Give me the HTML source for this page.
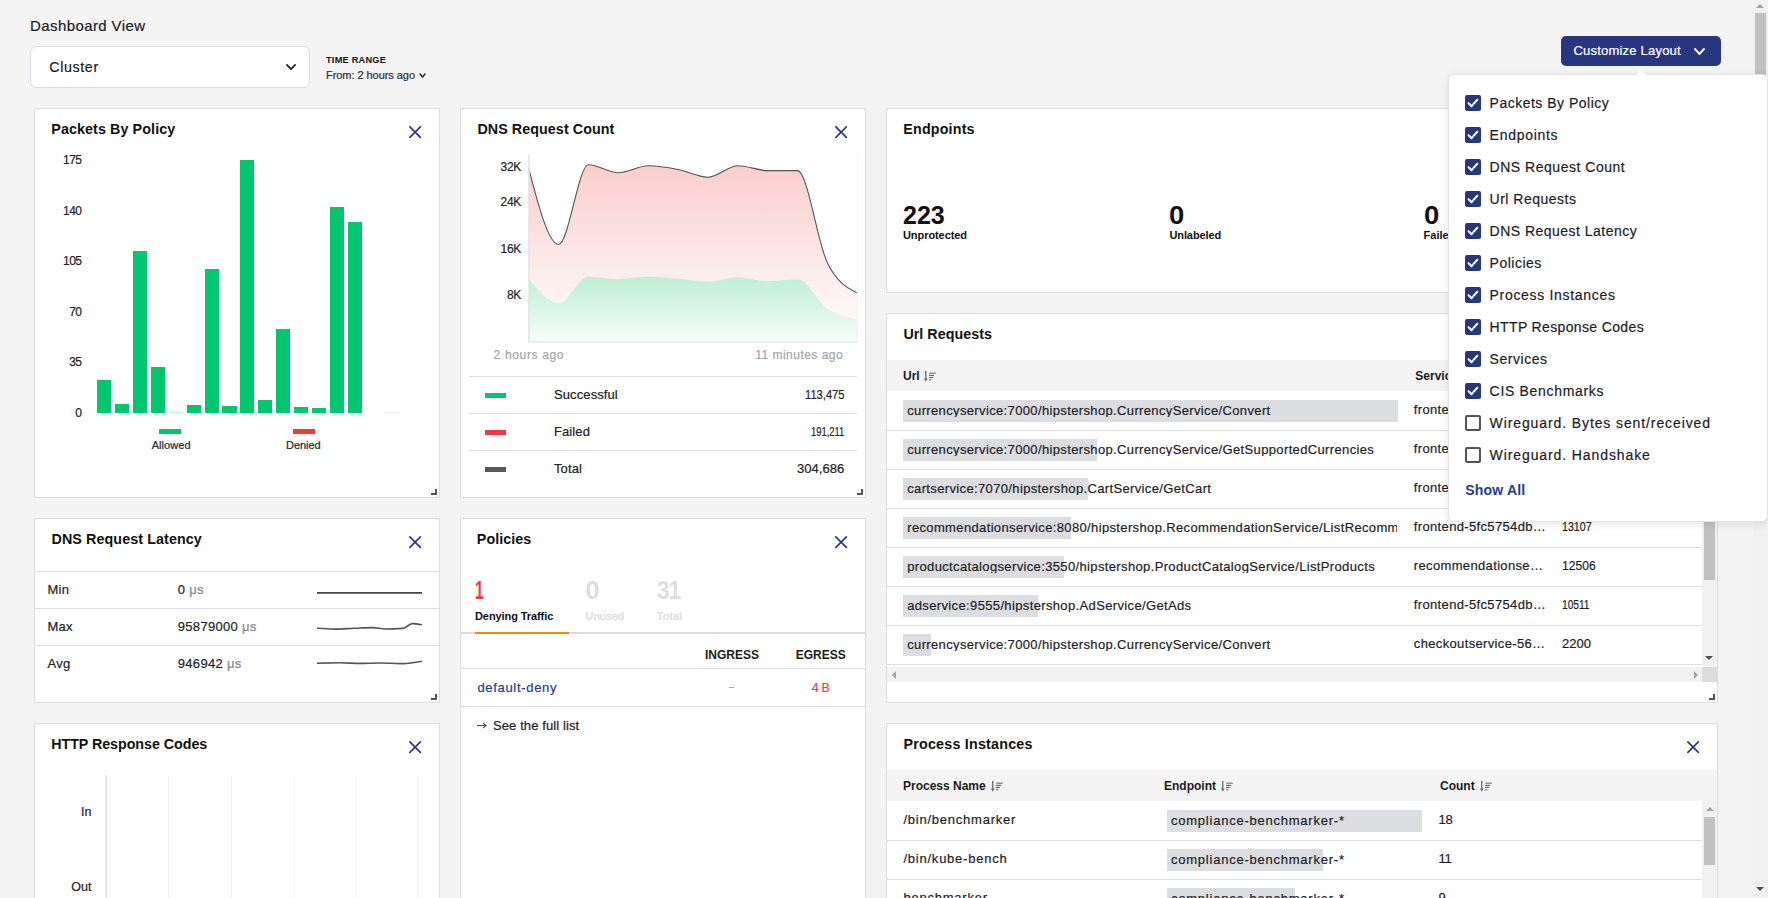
<!DOCTYPE html><html><head><meta charset="utf-8"><style>

html,body{margin:0;padding:0;width:1768px;height:898px;overflow:hidden;background:#f4f4f4;font-family:"Liberation Sans", sans-serif;}
body{position:relative;}
.card{position:absolute;background:#fff;border:1px solid #dcdde0;box-sizing:border-box;overflow:hidden;}

</style></head><body>
<span style="position:absolute;top:18.25px;font-size:15px;line-height:15px;font-weight:400;color:#1b1b26;white-space:nowrap;letter-spacing:0.407px;-webkit-text-stroke:0.2px #1b1b26;left:30px;">Dashboard View</span>
<div style="position:absolute;left:30px;top:46px;width:280px;height:42px;background:#fff;border:1px solid #dadbe0;border-radius:6px;box-sizing:border-box;"></div>
<span style="position:absolute;top:59.84px;font-size:14.3px;line-height:14.3px;font-weight:400;color:#1b1b26;white-space:nowrap;letter-spacing:0.615px;-webkit-text-stroke:0.2px #1b1b26;left:49.2px;">Cluster</span>
<svg style="position:absolute;left:284.9px;top:63px" width="12.1" height="8.2" viewBox="0 0 12.1 8.2"><path d="M2,2 L6.05,6.2 L10.1,2" fill="none" stroke="#222" stroke-width="1.8" stroke-linecap="round" stroke-linejoin="round"/></svg>
<span style="position:absolute;top:55.88px;font-size:9.2px;line-height:9.2px;font-weight:700;color:#111;white-space:nowrap;letter-spacing:0.231px;left:326px;">TIME RANGE</span>
<span style="position:absolute;top:69.65px;font-size:11px;line-height:11px;font-weight:400;color:#2a2a3a;white-space:nowrap;letter-spacing:-0.051px;-webkit-text-stroke:0.2px #2a2a3a;left:326px;">From: 2 hours ago</span>
<svg style="position:absolute;left:417.6px;top:72.4px" width="9" height="7" viewBox="0 0 9 7"><path d="M2,2 L4.5,5 L7,2" fill="none" stroke="#222" stroke-width="1.4" stroke-linecap="round" stroke-linejoin="round"/></svg>
<div style="position:absolute;left:1561px;top:36px;width:160px;height:30px;background:#27367f;border-radius:5px;"></div>
<span style="position:absolute;top:43.95px;font-size:13px;line-height:13px;font-weight:400;color:#fff;white-space:nowrap;letter-spacing:0.215px;-webkit-text-stroke:0.2px #fff;left:1573.4px;">Customize Layout</span>
<svg style="position:absolute;left:1692.5px;top:46.8px" width="13" height="9" viewBox="0 0 13 9"><path d="M2,2 L6.5,7 L11,2" fill="none" stroke="#fff" stroke-width="1.9" stroke-linecap="round" stroke-linejoin="round"/></svg>
<div style="position:absolute;left:34px;top:108px;width:406px;height:390px;background:#fff;border:1px solid #dcdde0;box-sizing:border-box;"></div>
<div style="position:absolute;left:460px;top:108px;width:406px;height:390px;background:#fff;border:1px solid #dcdde0;box-sizing:border-box;"></div>
<div style="position:absolute;left:886px;top:108px;width:832px;height:185px;background:#fff;border:1px solid #dcdde0;box-sizing:border-box;"></div>
<div style="position:absolute;left:886px;top:313px;width:832px;height:390px;background:#fff;border:1px solid #dcdde0;box-sizing:border-box;"></div>
<div style="position:absolute;left:34px;top:518px;width:406px;height:185px;background:#fff;border:1px solid #dcdde0;box-sizing:border-box;"></div>
<div style="position:absolute;left:460px;top:518px;width:406px;height:390px;background:#fff;border:1px solid #dcdde0;box-sizing:border-box;"></div>
<div style="position:absolute;left:34px;top:723px;width:406px;height:390px;background:#fff;border:1px solid #dcdde0;box-sizing:border-box;"></div>
<div style="position:absolute;left:886px;top:723px;width:832px;height:390px;background:#fff;border:1px solid #dcdde0;box-sizing:border-box;"></div>
<span style="position:absolute;top:121.84px;font-size:14.3px;line-height:14.3px;font-weight:700;color:#111;white-space:nowrap;letter-spacing:0.095px;left:51.3px;">Packets By Policy</span>
<svg style="position:absolute;left:409px;top:126px" width="13" height="13" viewBox="0 0 13 13"><path d="M0.85,0.85 L11.35,11.35 M11.35,0.85 L0.85,11.35" stroke="#263482" stroke-width="1.6" stroke-linecap="round"/></svg>
<span style="position:absolute;top:153.50px;font-size:12px;line-height:12px;font-weight:400;color:#222;white-space:nowrap;letter-spacing:-0.500px;-webkit-text-stroke:0.2px #222;right:1686.5px;">175</span>
<span style="position:absolute;top:204.50px;font-size:12px;line-height:12px;font-weight:400;color:#222;white-space:nowrap;letter-spacing:-0.500px;-webkit-text-stroke:0.2px #222;right:1686.5px;">140</span>
<span style="position:absolute;top:254.50px;font-size:12px;line-height:12px;font-weight:400;color:#222;white-space:nowrap;letter-spacing:-0.500px;-webkit-text-stroke:0.2px #222;right:1686.5px;">105</span>
<span style="position:absolute;top:305.50px;font-size:12px;line-height:12px;font-weight:400;color:#222;white-space:nowrap;letter-spacing:-0.500px;-webkit-text-stroke:0.2px #222;right:1686.5px;">70</span>
<span style="position:absolute;top:356.00px;font-size:12px;line-height:12px;font-weight:400;color:#222;white-space:nowrap;letter-spacing:-0.500px;-webkit-text-stroke:0.2px #222;right:1686.5px;">35</span>
<span style="position:absolute;top:406.50px;font-size:12px;line-height:12px;font-weight:400;color:#222;white-space:nowrap;letter-spacing:-0.500px;-webkit-text-stroke:0.2px #222;right:1686.5px;">0</span>
<div style="position:absolute;left:97.30px;top:379.70px;width:14.1px;height:33.30px;background:#01c670"></div>
<div style="position:absolute;left:115.18px;top:403.90px;width:14.1px;height:9.10px;background:#01c670"></div>
<div style="position:absolute;left:133.06px;top:250.90px;width:14.1px;height:162.10px;background:#01c670"></div>
<div style="position:absolute;left:150.94px;top:366.60px;width:14.1px;height:46.40px;background:#01c670"></div>
<div style="position:absolute;left:168.82px;top:412.30px;width:14.1px;height:0.70px;background:#01c670"></div>
<div style="position:absolute;left:186.70px;top:404.60px;width:14.1px;height:8.40px;background:#01c670"></div>
<div style="position:absolute;left:204.58px;top:268.50px;width:14.1px;height:144.50px;background:#01c670"></div>
<div style="position:absolute;left:222.46px;top:405.60px;width:14.1px;height:7.40px;background:#01c670"></div>
<div style="position:absolute;left:240.34px;top:160.40px;width:14.1px;height:252.60px;background:#01c670"></div>
<div style="position:absolute;left:258.22px;top:400.40px;width:14.1px;height:12.60px;background:#01c670"></div>
<div style="position:absolute;left:276.10px;top:328.90px;width:14.1px;height:84.10px;background:#01c670"></div>
<div style="position:absolute;left:293.98px;top:407.30px;width:14.1px;height:5.70px;background:#01c670"></div>
<div style="position:absolute;left:311.86px;top:408.00px;width:14.1px;height:5.00px;background:#01c670"></div>
<div style="position:absolute;left:329.74px;top:207.00px;width:14.1px;height:206.00px;background:#01c670"></div>
<div style="position:absolute;left:347.62px;top:221.50px;width:14.1px;height:191.50px;background:#01c670"></div>
<div style="position:absolute;left:169px;top:412px;width:14px;height:1px;background:#bdebd5"></div>
<div style="position:absolute;left:384px;top:412px;width:14px;height:1px;background:#fbe3e4"></div>
<div style="position:absolute;left:158.6px;top:429px;width:22.4px;height:5px;background:#01c670"></div>
<div style="position:absolute;left:293px;top:429px;width:22px;height:5px;background:#ef3b3d"></div>
<span style="position:absolute;top:439.65px;font-size:11px;line-height:11px;font-weight:400;color:#222;white-space:nowrap;letter-spacing:0.067px;-webkit-text-stroke:0.2px #222;left:151.7px;">Allowed</span>
<span style="position:absolute;top:439.65px;font-size:11px;line-height:11px;font-weight:400;color:#222;white-space:nowrap;letter-spacing:-0.027px;-webkit-text-stroke:0.2px #222;left:286px;">Denied</span>
<div style="position:absolute;left:431px;top:489px;width:6px;height:6px;border-right:2px solid #555;border-bottom:2px solid #555;box-sizing:border-box"></div>
<span style="position:absolute;top:121.84px;font-size:14.3px;line-height:14.3px;font-weight:700;color:#111;white-space:nowrap;letter-spacing:0.069px;left:477.4px;">DNS Request Count</span>
<svg style="position:absolute;left:835px;top:126px" width="13" height="13" viewBox="0 0 13 13"><path d="M0.85,0.85 L11.35,11.35 M11.35,0.85 L0.85,11.35" stroke="#263482" stroke-width="1.6" stroke-linecap="round"/></svg>
<svg style="position:absolute;left:0;top:0" width="1768" height="898" viewBox="0 0 1768 898">
<defs>
<linearGradient id="gr" x1="0" y1="0" x2="0" y2="1"><stop offset="0" stop-color="#fbcdcd"/><stop offset="0.3" stop-color="#fcdcdc"/><stop offset="0.62" stop-color="#fdeded"/><stop offset="1" stop-color="#fffefe"/></linearGradient>
<linearGradient id="gg" x1="0" y1="0" x2="0" y2="1"><stop offset="0" stop-color="#bdefd6"/><stop offset="1" stop-color="#f7fdfa"/></linearGradient>
</defs>
<path d="M528.70,168.30 C538.66,206.40 548.62,244.50 558.57,244.50 C568.53,244.50 578.49,164.80 588.45,164.80 C598.40,164.80 608.36,172.80 618.32,172.80 C628.28,172.80 638.23,165.80 648.19,165.80 C658.15,165.80 668.11,167.60 678.06,169.50 C688.02,171.40 697.98,177.20 707.94,177.20 C717.89,177.20 727.85,165.70 737.81,165.70 C747.77,165.70 757.72,170.60 767.68,170.60 C777.64,170.60 787.60,170.60 797.55,170.60 C807.51,170.60 817.47,243.07 827.43,263.00 C837.38,282.93 847.34,287.92 857.30,292.90 L857.3,342 L528.7,342 Z" fill="url(#gr)"/>
<path d="M528.70,279.00 C538.66,291.00 548.62,303.00 558.57,303.00 C568.53,303.00 578.49,276.70 588.45,276.70 C598.40,276.70 608.36,279.00 618.32,279.00 C628.28,279.00 638.23,276.50 648.19,276.50 C658.15,276.50 668.11,277.72 678.06,278.60 C688.02,279.48 697.98,281.80 707.94,281.80 C717.89,281.80 727.85,277.20 737.81,277.20 C747.77,277.20 757.72,281.30 767.68,281.30 C777.64,281.30 787.60,279.20 797.55,279.20 C807.51,279.20 817.47,301.80 827.43,308.50 C837.38,315.20 847.34,317.30 857.30,319.40 L857.3,342 L528.7,342 Z" fill="url(#gg)"/>
<path d="M528.70,168.30 C538.66,206.40 548.62,244.50 558.57,244.50 C568.53,244.50 578.49,164.80 588.45,164.80 C598.40,164.80 608.36,172.80 618.32,172.80 C628.28,172.80 638.23,165.80 648.19,165.80 C658.15,165.80 668.11,167.60 678.06,169.50 C688.02,171.40 697.98,177.20 707.94,177.20 C717.89,177.20 727.85,165.70 737.81,165.70 C747.77,165.70 757.72,170.60 767.68,170.60 C777.64,170.60 787.60,170.60 797.55,170.60 C807.51,170.60 817.47,243.07 827.43,263.00 C837.38,282.93 847.34,287.92 857.30,292.90" fill="none" stroke="#555" stroke-width="1.1"/>
<line x1="529" y1="155" x2="529" y2="342.5" stroke="#e4e4e6" stroke-width="1.6"/>
<line x1="528" y1="342" x2="857.5" y2="342" stroke="#e8e8ea" stroke-width="1.6"/>
<line x1="857.3" y1="155" x2="857.3" y2="342" stroke="#f3f3f4" stroke-width="1"/>
<path d="M317,592.9 H422" stroke="#444" stroke-width="1.8" fill="none"/>
<path d="M317.00,628.30 C323.00,628.70 329.00,629.10 335.00,629.10 C341.33,629.10 347.67,628.55 354.00,628.30 C360.33,628.05 366.67,627.60 373.00,627.60 C377.00,627.60 381.00,629.00 385.00,629.00 C391.00,629.00 397.00,628.80 403.00,628.40 C406.10,628.19 409.20,623.60 412.30,623.60 C415.53,623.60 418.77,624.20 422.00,624.80" stroke="#555" stroke-width="1.6" fill="none"/>
<path d="M317.00,663.30 C324.67,663.05 332.33,662.80 340.00,662.80 C346.67,662.80 353.33,663.40 360.00,663.40 C366.67,663.40 373.33,663.00 380.00,663.00 C387.67,663.00 395.33,663.60 403.00,663.60 C406.00,663.60 409.00,663.17 412.00,662.80 C415.33,662.39 418.67,661.80 422.00,661.20" stroke="#555" stroke-width="1.6" fill="none"/>
</svg>
<span style="position:absolute;top:160.90px;font-size:12px;line-height:12px;font-weight:400;color:#222;white-space:nowrap;letter-spacing:-0.300px;-webkit-text-stroke:0.2px #222;right:1247px;">32K</span>
<span style="position:absolute;top:195.50px;font-size:12px;line-height:12px;font-weight:400;color:#222;white-space:nowrap;letter-spacing:-0.300px;-webkit-text-stroke:0.2px #222;right:1247px;">24K</span>
<span style="position:absolute;top:242.80px;font-size:12px;line-height:12px;font-weight:400;color:#222;white-space:nowrap;letter-spacing:-0.300px;-webkit-text-stroke:0.2px #222;right:1247px;">16K</span>
<span style="position:absolute;top:289.00px;font-size:12px;line-height:12px;font-weight:400;color:#222;white-space:nowrap;letter-spacing:-0.300px;-webkit-text-stroke:0.2px #222;right:1247px;">8K</span>
<span style="position:absolute;top:348.60px;font-size:12px;line-height:12px;font-weight:400;color:#a4a4ae;white-space:nowrap;letter-spacing:0.655px;-webkit-text-stroke:0.2px #a4a4ae;left:493.6px;">2 hours ago</span>
<span style="position:absolute;top:348.60px;font-size:12px;line-height:12px;font-weight:400;color:#a4a4ae;white-space:nowrap;letter-spacing:0.473px;-webkit-text-stroke:0.2px #a4a4ae;left:755.3px;">11 minutes ago</span>
<div style="position:absolute;left:469px;top:376px;width:388px;height:1px;background:#dedee2"></div>
<div style="position:absolute;left:469px;top:413px;width:388px;height:1px;background:#dedee2"></div>
<div style="position:absolute;left:469px;top:450px;width:388px;height:1px;background:#dedee2"></div>
<div style="position:absolute;left:485px;top:392.7px;width:21px;height:5px;background:#01c670"></div>
<span style="position:absolute;top:388.45px;font-size:13px;line-height:13px;font-weight:400;color:#222;white-space:nowrap;letter-spacing:0.100px;-webkit-text-stroke:0.2px #222;left:554px;">Successful</span>
<span style="position:absolute;top:388.45px;font-size:13px;line-height:13px;font-weight:400;color:#222;white-space:nowrap;-webkit-text-stroke:0.2px #222;left:805.1px;transform:scaleX(0.8581);transform-origin:0 0;">113,475</span>
<div style="position:absolute;left:485px;top:429.7px;width:21px;height:5px;background:#ef3b3d"></div>
<span style="position:absolute;top:425.45px;font-size:13px;line-height:13px;font-weight:400;color:#222;white-space:nowrap;letter-spacing:0.100px;-webkit-text-stroke:0.2px #222;left:554px;">Failed</span>
<span style="position:absolute;top:425.45px;font-size:13px;line-height:13px;font-weight:400;color:#222;white-space:nowrap;-webkit-text-stroke:0.2px #222;left:811.3000000000001px;transform:scaleX(0.7234);transform-origin:0 0;">191,211</span>
<div style="position:absolute;left:485px;top:466.7px;width:21px;height:5px;background:#5a5a5a"></div>
<span style="position:absolute;top:462.45px;font-size:13px;line-height:13px;font-weight:400;color:#222;white-space:nowrap;letter-spacing:0.100px;-webkit-text-stroke:0.2px #222;left:554px;">Total</span>
<span style="position:absolute;top:462.45px;font-size:13px;line-height:13px;font-weight:400;color:#222;white-space:nowrap;-webkit-text-stroke:0.2px #222;left:797.3000000000001px;transform:scaleX(1.0064);transform-origin:0 0;">304,686</span>
<div style="position:absolute;left:857px;top:489px;width:6px;height:6px;border-right:2px solid #555;border-bottom:2px solid #555;box-sizing:border-box"></div>
<span style="position:absolute;top:121.84px;font-size:14.3px;line-height:14.3px;font-weight:700;color:#111;white-space:nowrap;letter-spacing:0.168px;left:903.3px;">Endpoints</span>
<span style="position:absolute;top:202.95px;font-size:25px;line-height:25px;font-weight:700;color:#111;white-space:nowrap;left:903px;">223</span>
<span style="position:absolute;top:230.15px;font-size:11px;line-height:11px;font-weight:700;color:#111;white-space:nowrap;letter-spacing:-0.071px;left:903px;">Unprotected</span>
<span style="position:absolute;top:202.95px;font-size:25px;line-height:25px;font-weight:700;color:#111;white-space:nowrap;letter-spacing:0.300px;left:1169.4px;transform:scaleX(1.1);transform-origin:0 0;">0</span>
<span style="position:absolute;top:230.15px;font-size:11px;line-height:11px;font-weight:700;color:#111;white-space:nowrap;letter-spacing:-0.086px;left:1169.4px;">Unlabeled</span>
<span style="position:absolute;top:202.95px;font-size:25px;line-height:25px;font-weight:700;color:#111;white-space:nowrap;letter-spacing:0.300px;left:1423.6px;transform:scaleX(1.1);transform-origin:0 0;">0</span>
<span style="position:absolute;top:230.15px;font-size:11px;line-height:11px;font-weight:700;color:#111;white-space:nowrap;left:1423.6px;">Failed</span>
<span style="position:absolute;top:327.25px;font-size:14.3px;line-height:14.3px;font-weight:700;color:#111;white-space:nowrap;letter-spacing:0.033px;left:903.4px;">Url Requests</span>
<div style="position:absolute;left:887px;top:360px;width:830px;height:31px;background:#f4f4f4"></div>
<span style="position:absolute;top:369.50px;font-size:12px;line-height:12px;font-weight:700;color:#1b1b1b;white-space:nowrap;left:903px;">Url</span>
<svg style="position:absolute;left:923px;top:370px" width="14" height="13" viewBox="0 0 14 13"><rect x="2.1" y="0.9" width="1.3" height="9.6" fill="#6a6a6a"/><path d="M0.9,8.6 L4.6,8.6 L2.75,11.6 Z" fill="#6a6a6a"/><rect x="6.2" y="2.5" width="6.6" height="1.4" fill="#8a8a8a"/><rect x="6.1" y="4.8" width="4.9" height="1.2" fill="#6a6a6a"/><rect x="6.0" y="6.9" width="4.0" height="1.2" fill="#6a6a6a"/><rect x="6.2" y="9.1" width="2.1" height="1.3" fill="#7a7a7a"/></svg>
<span style="position:absolute;top:369.50px;font-size:12px;line-height:12px;font-weight:700;color:#1b1b1b;white-space:nowrap;left:1415.3px;">Service</span>
<span style="position:absolute;top:369.50px;font-size:12px;line-height:12px;font-weight:700;color:#1b1b1b;white-space:nowrap;left:1562px;">Count</span>
<div style="position:absolute;left:887px;top:391px;width:815px;height:276px;overflow:hidden">
<div style="position:absolute;left:0;top:39px;width:815px;height:1px;background:#dedee2"></div>
<div style="position:absolute;left:16px;top:9px;width:494.8px;height:22px;background:#dcdde1"></div>
<div style="position:absolute;left:0;top:78px;width:815px;height:1px;background:#dedee2"></div>
<div style="position:absolute;left:16px;top:48px;width:194.0px;height:22px;background:#dcdde1"></div>
<div style="position:absolute;left:0;top:117px;width:815px;height:1px;background:#dedee2"></div>
<div style="position:absolute;left:16px;top:87px;width:185.0px;height:22px;background:#dcdde1"></div>
<div style="position:absolute;left:0;top:156px;width:815px;height:1px;background:#dedee2"></div>
<div style="position:absolute;left:16px;top:126px;width:167.6px;height:22px;background:#dcdde1"></div>
<div style="position:absolute;left:0;top:195px;width:815px;height:1px;background:#dedee2"></div>
<div style="position:absolute;left:16px;top:165px;width:160.5px;height:22px;background:#dcdde1"></div>
<div style="position:absolute;left:0;top:234px;width:815px;height:1px;background:#dedee2"></div>
<div style="position:absolute;left:16px;top:204px;width:134.8px;height:22px;background:#dcdde1"></div>
<div style="position:absolute;left:0;top:273px;width:815px;height:1px;background:#dedee2"></div>
<div style="position:absolute;left:16px;top:243px;width:27.8px;height:22px;background:#dcdde1"></div>
</div>
<span style="position:absolute;top:404.05px;font-size:13px;line-height:13px;font-weight:400;color:#1d1d1f;white-space:nowrap;letter-spacing:0.360px;-webkit-text-stroke:0.2px #1d1d1f;left:907.2px;width:490px;overflow:hidden;text-overflow:clip;display:block;">currencyservice:7000/hipstershop.CurrencyService/Convert</span>
<span style="position:absolute;top:403.05px;font-size:13px;line-height:13px;font-weight:400;color:#1d1d1f;white-space:nowrap;letter-spacing:0.350px;-webkit-text-stroke:0.2px #1d1d1f;left:1413.8px;">frontend-5fc5754db…</span>
<span style="position:absolute;top:403.05px;font-size:13px;line-height:13px;font-weight:400;color:#1d1d1f;white-space:nowrap;letter-spacing:-0.100px;-webkit-text-stroke:0.2px #1d1d1f;left:1562px;">38671</span>
<span style="position:absolute;top:443.05px;font-size:13px;line-height:13px;font-weight:400;color:#1d1d1f;white-space:nowrap;letter-spacing:0.360px;-webkit-text-stroke:0.2px #1d1d1f;left:907.2px;width:490px;overflow:hidden;text-overflow:clip;display:block;">currencyservice:7000/hipstershop.CurrencyService/GetSupportedCurrencies</span>
<span style="position:absolute;top:442.05px;font-size:13px;line-height:13px;font-weight:400;color:#1d1d1f;white-space:nowrap;letter-spacing:0.350px;-webkit-text-stroke:0.2px #1d1d1f;left:1413.8px;">frontend-5fc5754db…</span>
<span style="position:absolute;top:442.05px;font-size:13px;line-height:13px;font-weight:400;color:#1d1d1f;white-space:nowrap;letter-spacing:-0.100px;-webkit-text-stroke:0.2px #1d1d1f;left:1562px;">15170</span>
<span style="position:absolute;top:482.05px;font-size:13px;line-height:13px;font-weight:400;color:#1d1d1f;white-space:nowrap;letter-spacing:0.360px;-webkit-text-stroke:0.2px #1d1d1f;left:907.2px;width:490px;overflow:hidden;text-overflow:clip;display:block;">cartservice:7070/hipstershop.CartService/GetCart</span>
<span style="position:absolute;top:481.05px;font-size:13px;line-height:13px;font-weight:400;color:#1d1d1f;white-space:nowrap;letter-spacing:0.350px;-webkit-text-stroke:0.2px #1d1d1f;left:1413.8px;">frontend-5fc5754db…</span>
<span style="position:absolute;top:481.05px;font-size:13px;line-height:13px;font-weight:400;color:#1d1d1f;white-space:nowrap;letter-spacing:-0.100px;-webkit-text-stroke:0.2px #1d1d1f;left:1562px;">14460</span>
<span style="position:absolute;top:521.05px;font-size:13px;line-height:13px;font-weight:400;color:#1d1d1f;white-space:nowrap;letter-spacing:0.360px;-webkit-text-stroke:0.2px #1d1d1f;left:907.2px;width:490px;overflow:hidden;text-overflow:clip;display:block;">recommendationservice:8080/hipstershop.RecommendationService/ListRecommendations</span>
<span style="position:absolute;top:520.05px;font-size:13px;line-height:13px;font-weight:400;color:#1d1d1f;white-space:nowrap;letter-spacing:0.350px;-webkit-text-stroke:0.2px #1d1d1f;left:1413.8px;">frontend-5fc5754db…</span>
<span style="position:absolute;top:520.05px;font-size:13px;line-height:13px;font-weight:400;color:#1d1d1f;white-space:nowrap;-webkit-text-stroke:0.2px #1d1d1f;left:1562px;transform:scaleX(0.8187);transform-origin:0 0;">13107</span>
<span style="position:absolute;top:560.05px;font-size:13px;line-height:13px;font-weight:400;color:#1d1d1f;white-space:nowrap;letter-spacing:0.360px;-webkit-text-stroke:0.2px #1d1d1f;left:907.2px;width:490px;overflow:hidden;text-overflow:clip;display:block;">productcatalogservice:3550/hipstershop.ProductCatalogService/ListProducts</span>
<span style="position:absolute;top:559.05px;font-size:13px;line-height:13px;font-weight:400;color:#1d1d1f;white-space:nowrap;letter-spacing:0.350px;-webkit-text-stroke:0.2px #1d1d1f;left:1413.8px;">recommendationse…</span>
<span style="position:absolute;top:559.05px;font-size:13px;line-height:13px;font-weight:400;color:#1d1d1f;white-space:nowrap;-webkit-text-stroke:0.2px #1d1d1f;left:1562px;transform:scaleX(0.9293);transform-origin:0 0;">12506</span>
<span style="position:absolute;top:599.05px;font-size:13px;line-height:13px;font-weight:400;color:#1d1d1f;white-space:nowrap;letter-spacing:0.360px;-webkit-text-stroke:0.2px #1d1d1f;left:907.2px;width:490px;overflow:hidden;text-overflow:clip;display:block;">adservice:9555/hipstershop.AdService/GetAds</span>
<span style="position:absolute;top:598.05px;font-size:13px;line-height:13px;font-weight:400;color:#1d1d1f;white-space:nowrap;letter-spacing:0.350px;-webkit-text-stroke:0.2px #1d1d1f;left:1413.8px;">frontend-5fc5754db…</span>
<span style="position:absolute;top:598.05px;font-size:13px;line-height:13px;font-weight:400;color:#1d1d1f;white-space:nowrap;-webkit-text-stroke:0.2px #1d1d1f;left:1562px;transform:scaleX(0.7787);transform-origin:0 0;">10511</span>
<span style="position:absolute;top:638.05px;font-size:13px;line-height:13px;font-weight:400;color:#1d1d1f;white-space:nowrap;letter-spacing:0.360px;-webkit-text-stroke:0.2px #1d1d1f;left:907.2px;width:490px;overflow:hidden;text-overflow:clip;display:block;">currencyservice:7000/hipstershop.CurrencyService/Convert</span>
<span style="position:absolute;top:637.05px;font-size:13px;line-height:13px;font-weight:400;color:#1d1d1f;white-space:nowrap;letter-spacing:0.350px;-webkit-text-stroke:0.2px #1d1d1f;left:1413.8px;">checkoutservice-56…</span>
<span style="position:absolute;top:637.05px;font-size:13px;line-height:13px;font-weight:400;color:#1d1d1f;white-space:nowrap;-webkit-text-stroke:0.2px #1d1d1f;left:1562px;transform:scaleX(1.0027);transform-origin:0 0;">2200</span>
<div style="position:absolute;left:1702px;top:391px;width:15px;height:276px;background:#f1f1f1"></div>
<div style="position:absolute;left:1704px;top:460px;width:11px;height:120px;background:#c1c1c1"></div>
<div style="position:absolute;left:1705px;top:656px;width:0;height:0;border-left:4px solid transparent;border-right:4px solid transparent;border-top:4px solid #505050"></div>
<div style="position:absolute;left:887px;top:667px;width:815px;height:15px;background:#f1f1f1"></div>
<div style="position:absolute;left:1702px;top:667px;width:15px;height:15px;background:#dcdcdc"></div>
<div style="position:absolute;left:892px;top:670.5px;width:0;height:0;border-top:4px solid transparent;border-bottom:4px solid transparent;border-right:4px solid #a3a3a3"></div>
<div style="position:absolute;left:1694px;top:670.5px;width:0;height:0;border-top:4px solid transparent;border-bottom:4px solid transparent;border-left:4px solid #a3a3a3"></div>
<div style="position:absolute;left:1709px;top:694px;width:6px;height:6px;border-right:2px solid #555;border-bottom:2px solid #555;box-sizing:border-box"></div>
<span style="position:absolute;top:532.14px;font-size:14.3px;line-height:14.3px;font-weight:700;color:#111;white-space:nowrap;letter-spacing:0.096px;left:51.5px;">DNS Request Latency</span>
<svg style="position:absolute;left:409px;top:536px" width="13" height="13" viewBox="0 0 13 13"><path d="M0.85,0.85 L11.35,11.35 M11.35,0.85 L0.85,11.35" stroke="#263482" stroke-width="1.6" stroke-linecap="round"/></svg>
<div style="position:absolute;left:35px;top:571px;width:404px;height:1px;background:#dedee2"></div>
<div style="position:absolute;left:35px;top:608px;width:404px;height:1px;background:#dedee2"></div>
<div style="position:absolute;left:35px;top:645px;width:404px;height:1px;background:#dedee2"></div>
<span style="position:absolute;top:582.75px;font-size:13px;line-height:13px;font-weight:400;color:#1d1d1f;white-space:nowrap;letter-spacing:0.300px;-webkit-text-stroke:0.2px #1d1d1f;left:47.4px;">Min</span>
<span style="position:absolute;top:582.75px;font-size:13px;line-height:13px;font-weight:400;color:#1d1d1f;white-space:nowrap;letter-spacing:0.300px;-webkit-text-stroke:0.2px #1d1d1f;left:177.8px;">0 <span style="color:#a9a9b2">μs</span></span>
<span style="position:absolute;top:620.25px;font-size:13px;line-height:13px;font-weight:400;color:#1d1d1f;white-space:nowrap;letter-spacing:0.300px;-webkit-text-stroke:0.2px #1d1d1f;left:47.4px;">Max</span>
<span style="position:absolute;top:620.25px;font-size:13px;line-height:13px;font-weight:400;color:#1d1d1f;white-space:nowrap;letter-spacing:0.300px;-webkit-text-stroke:0.2px #1d1d1f;left:177.8px;">95879000 <span style="color:#a9a9b2">μs</span></span>
<span style="position:absolute;top:657.25px;font-size:13px;line-height:13px;font-weight:400;color:#1d1d1f;white-space:nowrap;letter-spacing:0.300px;-webkit-text-stroke:0.2px #1d1d1f;left:47.4px;">Avg</span>
<span style="position:absolute;top:657.25px;font-size:13px;line-height:13px;font-weight:400;color:#1d1d1f;white-space:nowrap;letter-spacing:0.300px;-webkit-text-stroke:0.2px #1d1d1f;left:177.8px;">946942 <span style="color:#a9a9b2">μs</span></span>
<div style="position:absolute;left:431px;top:694px;width:6px;height:6px;border-right:2px solid #555;border-bottom:2px solid #555;box-sizing:border-box"></div>
<span style="position:absolute;top:531.85px;font-size:14.3px;line-height:14.3px;font-weight:700;color:#111;white-space:nowrap;letter-spacing:0.044px;left:476.8px;">Policies</span>
<svg style="position:absolute;left:835px;top:536px" width="13" height="13" viewBox="0 0 13 13"><path d="M0.85,0.85 L11.35,11.35 M11.35,0.85 L0.85,11.35" stroke="#263482" stroke-width="1.6" stroke-linecap="round"/></svg>
<span style="position:absolute;top:577.75px;font-size:25px;line-height:25px;font-weight:700;color:#ef3b3d;white-space:nowrap;left:475px;transform:scaleX(0.62);transform-origin:0 0;">1</span>
<span style="position:absolute;top:610.75px;font-size:11px;line-height:11px;font-weight:700;color:#111;white-space:nowrap;letter-spacing:-0.085px;left:475px;">Denying Traffic</span>
<span style="position:absolute;top:577.75px;font-size:25px;line-height:25px;font-weight:700;color:#dcdde0;white-space:nowrap;left:585.6px;">0</span>
<span style="position:absolute;top:610.75px;font-size:11px;line-height:11px;font-weight:700;color:#dcdde0;white-space:nowrap;letter-spacing:-0.324px;left:585.6px;">Unused</span>
<span style="position:absolute;top:577.75px;font-size:25px;line-height:25px;font-weight:700;color:#dcdde0;white-space:nowrap;letter-spacing:-1.200px;left:656.8px;transform:scaleX(0.9);transform-origin:0 0;">31</span>
<span style="position:absolute;top:610.75px;font-size:11px;line-height:11px;font-weight:700;color:#dcdde0;white-space:nowrap;letter-spacing:-0.054px;left:656.8px;">Total</span>
<div style="position:absolute;left:461px;top:632px;width:404px;height:2px;background:#dcdde1"></div>
<div style="position:absolute;left:475px;top:632px;width:94px;height:2px;background:#f28b0c"></div>
<div style="position:absolute;left:461px;top:668px;width:404px;height:1px;background:#dedee2"></div>
<span style="position:absolute;top:648.70px;font-size:12px;line-height:12px;font-weight:700;color:#1b1b1b;white-space:nowrap;left:705px;">INGRESS</span>
<span style="position:absolute;top:648.70px;font-size:12px;line-height:12px;font-weight:700;color:#1b1b1b;white-space:nowrap;left:795.7px;">EGRESS</span>
<span style="position:absolute;top:681.35px;font-size:13px;line-height:13px;font-weight:400;color:#2b3a8a;white-space:nowrap;letter-spacing:0.686px;-webkit-text-stroke:0.2px #2b3a8a;left:477.4px;">default-deny</span>
<div style="position:absolute;left:729.3px;top:687px;width:5px;height:1px;background:#a5a5a8"></div>
<span style="position:absolute;top:681.75px;font-size:12.3px;line-height:12.3px;font-weight:400;color:#ef3b3d;white-space:nowrap;letter-spacing:-0.256px;-webkit-text-stroke:0.2px #ef3b3d;left:811.7px;">4 B</span>
<div style="position:absolute;left:461px;top:706px;width:404px;height:1px;background:#dedee2"></div>
<svg style="position:absolute;left:476px;top:721px" width="12" height="9" viewBox="0 0 12 9"><path d="M1,4.5 H10 M7,1.8 L10,4.5 L7,7.2" fill="none" stroke="#444" stroke-width="1.1"/></svg>
<span style="position:absolute;top:718.75px;font-size:13px;line-height:13px;font-weight:400;color:#1d1d1f;white-space:nowrap;letter-spacing:0.097px;-webkit-text-stroke:0.2px #1d1d1f;left:493px;">See the full list</span>
<span style="position:absolute;top:737.25px;font-size:14.3px;line-height:14.3px;font-weight:700;color:#111;white-space:nowrap;letter-spacing:-0.055px;left:51.2px;">HTTP Response Codes</span>
<svg style="position:absolute;left:409px;top:741px" width="13" height="13" viewBox="0 0 13 13"><path d="M0.85,0.85 L11.35,11.35 M11.35,0.85 L0.85,11.35" stroke="#263482" stroke-width="1.6" stroke-linecap="round"/></svg>
<div style="position:absolute;left:105px;top:775px;width:2px;height:130px;background:#e6e6e8"></div>
<div style="position:absolute;left:168.3px;top:775px;width:1px;height:130px;background:#f4f4f6"></div>
<div style="position:absolute;left:230.8px;top:775px;width:1px;height:130px;background:#f4f4f6"></div>
<div style="position:absolute;left:293.5px;top:775px;width:1px;height:130px;background:#f4f4f6"></div>
<div style="position:absolute;left:355.5px;top:775px;width:1px;height:130px;background:#f4f4f6"></div>
<div style="position:absolute;left:417.5px;top:775px;width:1px;height:130px;background:#f4f4f6"></div>
<span style="position:absolute;top:806.48px;font-size:12.5px;line-height:12.5px;font-weight:400;color:#222;white-space:nowrap;-webkit-text-stroke:0.2px #222;right:1676.6px;">In</span>
<span style="position:absolute;top:881.17px;font-size:12.5px;line-height:12.5px;font-weight:400;color:#222;white-space:nowrap;-webkit-text-stroke:0.2px #222;right:1676.6px;">Out</span>
<span style="position:absolute;top:737.14px;font-size:14.3px;line-height:14.3px;font-weight:700;color:#111;white-space:nowrap;letter-spacing:0.219px;left:903.4px;">Process Instances</span>
<svg style="position:absolute;left:1687px;top:741px" width="13" height="13" viewBox="0 0 13 13"><path d="M0.85,0.85 L11.35,11.35 M11.35,0.85 L0.85,11.35" stroke="#263482" stroke-width="1.6" stroke-linecap="round"/></svg>
<div style="position:absolute;left:887px;top:770px;width:830px;height:31px;background:#f4f4f4"></div>
<span style="position:absolute;top:780.20px;font-size:12px;line-height:12px;font-weight:700;color:#1b1b1b;white-space:nowrap;left:903px;">Process Name</span>
<svg style="position:absolute;left:989.6px;top:780.2px" width="14" height="13" viewBox="0 0 14 13"><rect x="2.1" y="0.9" width="1.3" height="9.6" fill="#6a6a6a"/><path d="M0.9,8.6 L4.6,8.6 L2.75,11.6 Z" fill="#6a6a6a"/><rect x="6.2" y="2.5" width="6.6" height="1.4" fill="#8a8a8a"/><rect x="6.1" y="4.8" width="4.9" height="1.2" fill="#6a6a6a"/><rect x="6.0" y="6.9" width="4.0" height="1.2" fill="#6a6a6a"/><rect x="6.2" y="9.1" width="2.1" height="1.3" fill="#7a7a7a"/></svg>
<span style="position:absolute;top:780.20px;font-size:12px;line-height:12px;font-weight:700;color:#1b1b1b;white-space:nowrap;left:1164px;">Endpoint</span>
<svg style="position:absolute;left:1219.6px;top:780.2px" width="14" height="13" viewBox="0 0 14 13"><rect x="2.1" y="0.9" width="1.3" height="9.6" fill="#6a6a6a"/><path d="M0.9,8.6 L4.6,8.6 L2.75,11.6 Z" fill="#6a6a6a"/><rect x="6.2" y="2.5" width="6.6" height="1.4" fill="#8a8a8a"/><rect x="6.1" y="4.8" width="4.9" height="1.2" fill="#6a6a6a"/><rect x="6.0" y="6.9" width="4.0" height="1.2" fill="#6a6a6a"/><rect x="6.2" y="9.1" width="2.1" height="1.3" fill="#7a7a7a"/></svg>
<span style="position:absolute;top:780.20px;font-size:12px;line-height:12px;font-weight:700;color:#1b1b1b;white-space:nowrap;left:1440px;">Count</span>
<svg style="position:absolute;left:1478.7px;top:780.2px" width="14" height="13" viewBox="0 0 14 13"><rect x="2.1" y="0.9" width="1.3" height="9.6" fill="#6a6a6a"/><path d="M0.9,8.6 L4.6,8.6 L2.75,11.6 Z" fill="#6a6a6a"/><rect x="6.2" y="2.5" width="6.6" height="1.4" fill="#8a8a8a"/><rect x="6.1" y="4.8" width="4.9" height="1.2" fill="#6a6a6a"/><rect x="6.0" y="6.9" width="4.0" height="1.2" fill="#6a6a6a"/><rect x="6.2" y="9.1" width="2.1" height="1.3" fill="#7a7a7a"/></svg>
<div style="position:absolute;left:887px;top:840px;width:815px;height:1px;background:#dedee2"></div>
<div style="position:absolute;left:1166.8px;top:810px;width:255.20000000000005px;height:22px;background:#dcdde1"></div>
<span style="position:absolute;top:813.05px;font-size:13px;line-height:13px;font-weight:400;color:#1d1d1f;white-space:nowrap;letter-spacing:0.760px;-webkit-text-stroke:0.2px #1d1d1f;left:903.5px;">/bin/benchmarker</span>
<span style="position:absolute;top:813.65px;font-size:13px;line-height:13px;font-weight:400;color:#1d1d1f;white-space:nowrap;letter-spacing:0.765px;-webkit-text-stroke:0.2px #1d1d1f;left:1171px;">compliance-benchmarker-*</span>
<span style="position:absolute;top:813.05px;font-size:13px;line-height:13px;font-weight:400;color:#1d1d1f;white-space:nowrap;letter-spacing:-0.200px;-webkit-text-stroke:0.2px #1d1d1f;left:1438.4px;">18</span>
<div style="position:absolute;left:887px;top:879px;width:815px;height:1px;background:#dedee2"></div>
<div style="position:absolute;left:1166.8px;top:849px;width:156.20000000000005px;height:22px;background:#dcdde1"></div>
<span style="position:absolute;top:852.05px;font-size:13px;line-height:13px;font-weight:400;color:#1d1d1f;white-space:nowrap;letter-spacing:0.760px;-webkit-text-stroke:0.2px #1d1d1f;left:903.5px;">/bin/kube-bench</span>
<span style="position:absolute;top:852.65px;font-size:13px;line-height:13px;font-weight:400;color:#1d1d1f;white-space:nowrap;letter-spacing:0.765px;-webkit-text-stroke:0.2px #1d1d1f;left:1171px;">compliance-benchmarker-*</span>
<span style="position:absolute;top:852.05px;font-size:13px;line-height:13px;font-weight:400;color:#1d1d1f;white-space:nowrap;letter-spacing:-0.200px;-webkit-text-stroke:0.2px #1d1d1f;left:1438.4px;">11</span>
<div style="position:absolute;left:1166.8px;top:888px;width:128.20000000000005px;height:22px;background:#dcdde1"></div>
<span style="position:absolute;top:891.05px;font-size:13px;line-height:13px;font-weight:400;color:#1d1d1f;white-space:nowrap;letter-spacing:0.760px;-webkit-text-stroke:0.2px #1d1d1f;left:903.5px;">benchmarker</span>
<span style="position:absolute;top:891.65px;font-size:13px;line-height:13px;font-weight:400;color:#1d1d1f;white-space:nowrap;letter-spacing:0.765px;-webkit-text-stroke:0.2px #1d1d1f;left:1171px;">compliance-benchmarker-*</span>
<span style="position:absolute;top:891.05px;font-size:13px;line-height:13px;font-weight:400;color:#1d1d1f;white-space:nowrap;letter-spacing:-0.200px;-webkit-text-stroke:0.2px #1d1d1f;left:1438.4px;">9</span>
<div style="position:absolute;left:1702px;top:801px;width:15px;height:97px;background:#f1f1f1"></div>
<div style="position:absolute;left:1704px;top:816.6px;width:11px;height:48px;background:#c1c1c1"></div>
<div style="position:absolute;left:1705.5px;top:807px;width:0;height:0;border-left:4px solid transparent;border-right:4px solid transparent;border-bottom:4px solid #a3a3a3"></div>
<div style="position:absolute;left:1753px;top:0px;width:15px;height:898px;background:#f1f1f1"></div>
<div style="position:absolute;left:1755px;top:13px;width:11px;height:62px;background:#c1c1c1"></div>
<div style="position:absolute;left:1756px;top:4px;width:0;height:0;border-left:4px solid transparent;border-right:4px solid transparent;border-bottom:4px solid #a3a3a3"></div>
<div style="position:absolute;left:1756px;top:887px;width:0;height:0;border-left:4px solid transparent;border-right:4px solid transparent;border-top:4px solid #505050"></div>
<div style="position:absolute;left:1448px;top:74px;width:319.5px;height:447.5px;background:#fff;border-radius:6px;box-sizing:border-box;border:1px solid #e2e3e7;box-shadow:0 2px 8px rgba(0,0,0,0.10);"></div>
<div style="position:absolute;left:1635.5px;top:69px;width:0;height:0;border-left:5.5px solid transparent;border-right:5.5px solid transparent;border-bottom:6px solid #fff"></div>
<div style="position:absolute;left:1465px;top:95px;width:16px;height:16px;background:#27367f;border-radius:2px"><svg width="16" height="16" viewBox="0 0 16 16" style="position:absolute;left:0;top:0"><path d="M3.6,8.3 L6.6,11.2 L12.4,4.6" fill="none" stroke="#fff" stroke-width="2" stroke-linecap="round" stroke-linejoin="round"/></svg></div>
<span style="position:absolute;top:96.10px;font-size:14px;line-height:14px;font-weight:400;color:#1d1d1f;white-space:nowrap;letter-spacing:0.496px;-webkit-text-stroke:0.2px #1d1d1f;left:1489.6px;">Packets By Policy</span>
<div style="position:absolute;left:1465px;top:127px;width:16px;height:16px;background:#27367f;border-radius:2px"><svg width="16" height="16" viewBox="0 0 16 16" style="position:absolute;left:0;top:0"><path d="M3.6,8.3 L6.6,11.2 L12.4,4.6" fill="none" stroke="#fff" stroke-width="2" stroke-linecap="round" stroke-linejoin="round"/></svg></div>
<span style="position:absolute;top:128.10px;font-size:14px;line-height:14px;font-weight:400;color:#1d1d1f;white-space:nowrap;letter-spacing:0.713px;-webkit-text-stroke:0.2px #1d1d1f;left:1489.6px;">Endpoints</span>
<div style="position:absolute;left:1465px;top:159px;width:16px;height:16px;background:#27367f;border-radius:2px"><svg width="16" height="16" viewBox="0 0 16 16" style="position:absolute;left:0;top:0"><path d="M3.6,8.3 L6.6,11.2 L12.4,4.6" fill="none" stroke="#fff" stroke-width="2" stroke-linecap="round" stroke-linejoin="round"/></svg></div>
<span style="position:absolute;top:160.10px;font-size:14px;line-height:14px;font-weight:400;color:#1d1d1f;white-space:nowrap;letter-spacing:0.515px;-webkit-text-stroke:0.2px #1d1d1f;left:1489.6px;">DNS Request Count</span>
<div style="position:absolute;left:1465px;top:191px;width:16px;height:16px;background:#27367f;border-radius:2px"><svg width="16" height="16" viewBox="0 0 16 16" style="position:absolute;left:0;top:0"><path d="M3.6,8.3 L6.6,11.2 L12.4,4.6" fill="none" stroke="#fff" stroke-width="2" stroke-linecap="round" stroke-linejoin="round"/></svg></div>
<span style="position:absolute;top:192.10px;font-size:14px;line-height:14px;font-weight:400;color:#1d1d1f;white-space:nowrap;letter-spacing:0.490px;-webkit-text-stroke:0.2px #1d1d1f;left:1489.6px;">Url Requests</span>
<div style="position:absolute;left:1465px;top:223px;width:16px;height:16px;background:#27367f;border-radius:2px"><svg width="16" height="16" viewBox="0 0 16 16" style="position:absolute;left:0;top:0"><path d="M3.6,8.3 L6.6,11.2 L12.4,4.6" fill="none" stroke="#fff" stroke-width="2" stroke-linecap="round" stroke-linejoin="round"/></svg></div>
<span style="position:absolute;top:224.10px;font-size:14px;line-height:14px;font-weight:400;color:#1d1d1f;white-space:nowrap;letter-spacing:0.477px;-webkit-text-stroke:0.2px #1d1d1f;left:1489.6px;">DNS Request Latency</span>
<div style="position:absolute;left:1465px;top:255px;width:16px;height:16px;background:#27367f;border-radius:2px"><svg width="16" height="16" viewBox="0 0 16 16" style="position:absolute;left:0;top:0"><path d="M3.6,8.3 L6.6,11.2 L12.4,4.6" fill="none" stroke="#fff" stroke-width="2" stroke-linecap="round" stroke-linejoin="round"/></svg></div>
<span style="position:absolute;top:256.10px;font-size:14px;line-height:14px;font-weight:400;color:#1d1d1f;white-space:nowrap;letter-spacing:0.494px;-webkit-text-stroke:0.2px #1d1d1f;left:1489.6px;">Policies</span>
<div style="position:absolute;left:1465px;top:287px;width:16px;height:16px;background:#27367f;border-radius:2px"><svg width="16" height="16" viewBox="0 0 16 16" style="position:absolute;left:0;top:0"><path d="M3.6,8.3 L6.6,11.2 L12.4,4.6" fill="none" stroke="#fff" stroke-width="2" stroke-linecap="round" stroke-linejoin="round"/></svg></div>
<span style="position:absolute;top:288.10px;font-size:14px;line-height:14px;font-weight:400;color:#1d1d1f;white-space:nowrap;letter-spacing:0.683px;-webkit-text-stroke:0.2px #1d1d1f;left:1489.6px;">Process Instances</span>
<div style="position:absolute;left:1465px;top:319px;width:16px;height:16px;background:#27367f;border-radius:2px"><svg width="16" height="16" viewBox="0 0 16 16" style="position:absolute;left:0;top:0"><path d="M3.6,8.3 L6.6,11.2 L12.4,4.6" fill="none" stroke="#fff" stroke-width="2" stroke-linecap="round" stroke-linejoin="round"/></svg></div>
<span style="position:absolute;top:320.10px;font-size:14px;line-height:14px;font-weight:400;color:#1d1d1f;white-space:nowrap;letter-spacing:0.358px;-webkit-text-stroke:0.2px #1d1d1f;left:1489.6px;">HTTP Response Codes</span>
<div style="position:absolute;left:1465px;top:351px;width:16px;height:16px;background:#27367f;border-radius:2px"><svg width="16" height="16" viewBox="0 0 16 16" style="position:absolute;left:0;top:0"><path d="M3.6,8.3 L6.6,11.2 L12.4,4.6" fill="none" stroke="#fff" stroke-width="2" stroke-linecap="round" stroke-linejoin="round"/></svg></div>
<span style="position:absolute;top:352.10px;font-size:14px;line-height:14px;font-weight:400;color:#1d1d1f;white-space:nowrap;letter-spacing:0.527px;-webkit-text-stroke:0.2px #1d1d1f;left:1489.6px;">Services</span>
<div style="position:absolute;left:1465px;top:383px;width:16px;height:16px;background:#27367f;border-radius:2px"><svg width="16" height="16" viewBox="0 0 16 16" style="position:absolute;left:0;top:0"><path d="M3.6,8.3 L6.6,11.2 L12.4,4.6" fill="none" stroke="#fff" stroke-width="2" stroke-linecap="round" stroke-linejoin="round"/></svg></div>
<span style="position:absolute;top:384.10px;font-size:14px;line-height:14px;font-weight:400;color:#1d1d1f;white-space:nowrap;letter-spacing:0.682px;-webkit-text-stroke:0.2px #1d1d1f;left:1489.6px;">CIS Benchmarks</span>
<div style="position:absolute;left:1465px;top:415px;width:16px;height:16px;border:2px solid #555;border-radius:2px;box-sizing:border-box"></div>
<span style="position:absolute;top:416.10px;font-size:14px;line-height:14px;font-weight:400;color:#1d1d1f;white-space:nowrap;letter-spacing:0.892px;-webkit-text-stroke:0.2px #1d1d1f;left:1489.6px;">Wireguard. Bytes sent/received</span>
<div style="position:absolute;left:1465px;top:447px;width:16px;height:16px;border:2px solid #555;border-radius:2px;box-sizing:border-box"></div>
<span style="position:absolute;top:448.10px;font-size:14px;line-height:14px;font-weight:400;color:#1d1d1f;white-space:nowrap;letter-spacing:0.901px;-webkit-text-stroke:0.2px #1d1d1f;left:1489.6px;">Wireguard. Handshake</span>
<span style="position:absolute;top:483.00px;font-size:14px;line-height:14px;font-weight:700;color:#263a8c;white-space:nowrap;letter-spacing:0.201px;left:1465.2px;">Show All</span>


</body></html>
